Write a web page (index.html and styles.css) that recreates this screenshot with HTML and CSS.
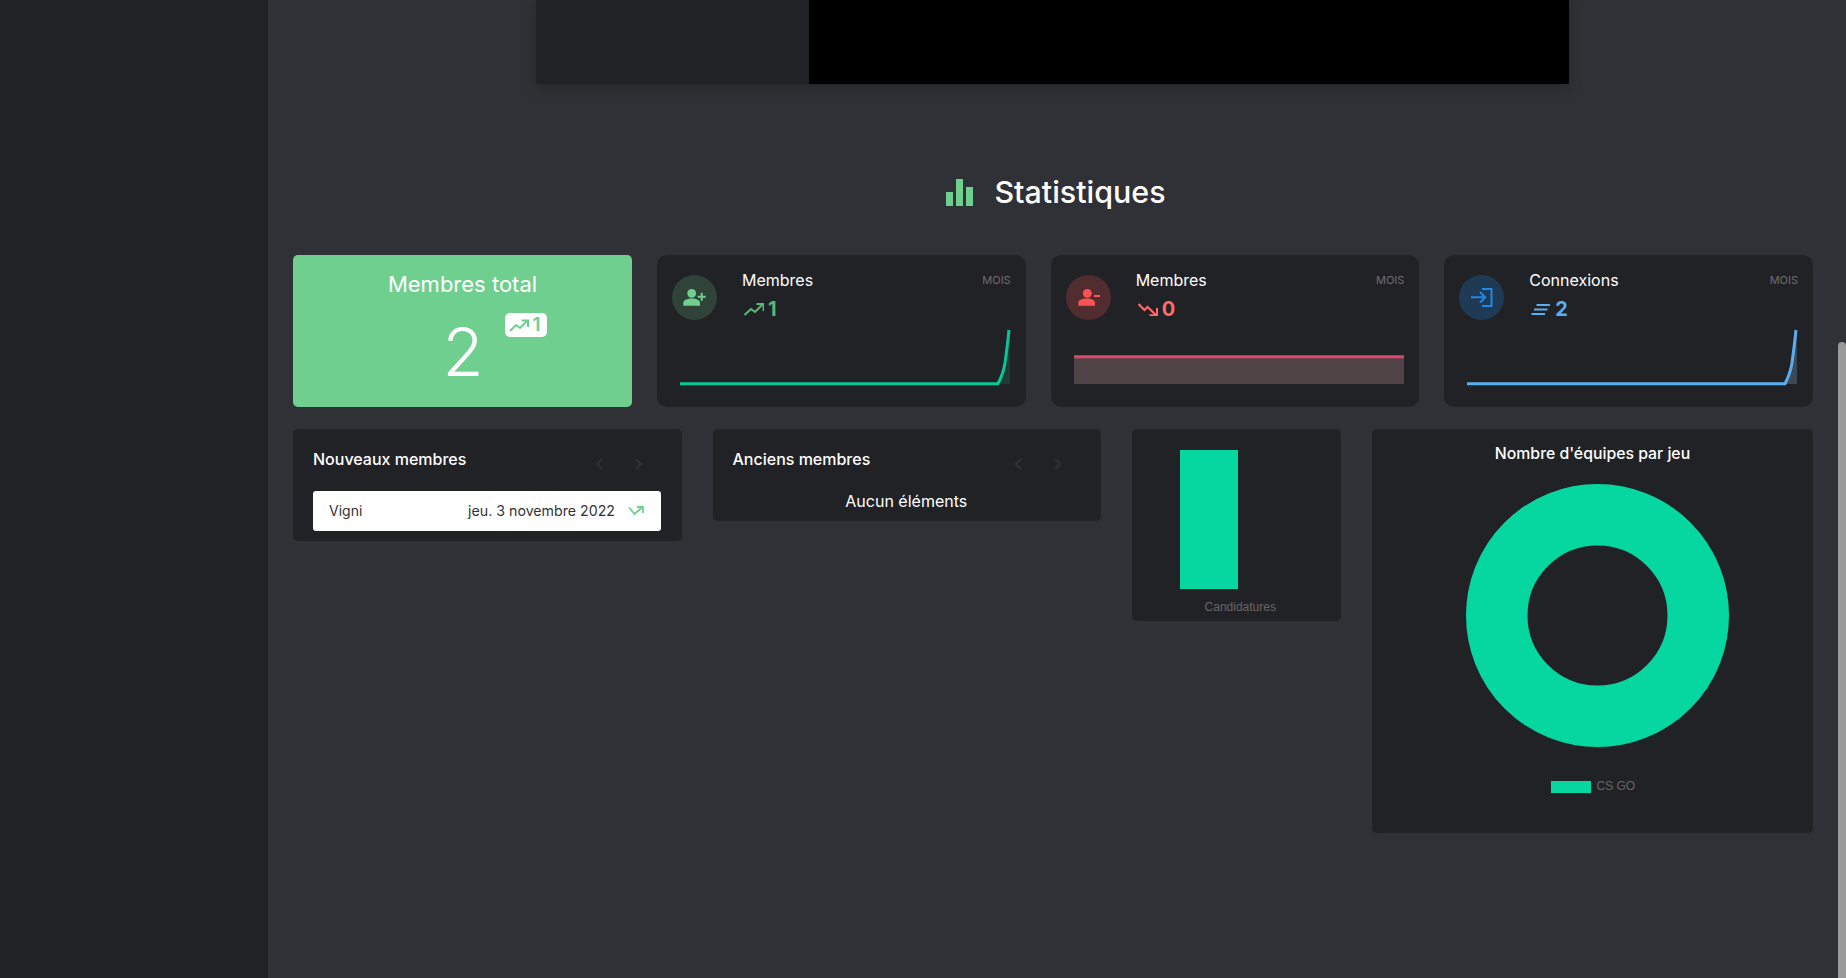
FILE: index.html
```html
<!DOCTYPE html>
<html lang="fr">
<head>
    <meta charset="UTF-8">
    <meta name="viewport" content="width=device-width, initial-scale=1.0">
    <title>Statistiques</title>
    <link rel="stylesheet" href="styles.css">
</head>
<body>
    <div class="app">
        <aside class="sidebar"></aside>

        <main class="content">
            <div class="video-block">
                <div class="video-side"></div>
                <div class="video-player"></div>
            </div>

            <h2 class="section-title">
                <svg class="section-icon" viewBox="0 0 27 27" aria-hidden="true">
                    <rect x="0" y="13" width="7" height="14"/>
                    <rect x="10" y="0" width="7" height="27"/>
                    <rect x="20" y="8" width="7" height="19"/>
                </svg>
                Statistiques
            </h2>

            <section class="stats-row">
                <div class="total-card">
                    <div class="total-title">Membres total</div>
                    <div class="total-value">2
                        <span class="total-badge">
                            <svg class="trend-small" viewBox="0 0 20 13" aria-hidden="true">
                                <path d="M1 12 L7 6 L11 9 L18 2"/>
                                <path d="M12.5 1.5 H19 V8"/>
                            </svg>1
                        </span>
                    </div>
                </div>

                <div class="stat-card">
                    <div class="stat-head">
                        <svg class="stat-circle circle-green" viewBox="0 0 45 45" aria-hidden="true">
                            <circle cx="19.7" cy="18.3" r="4.4"/>
                            <path d="M11.3 30.7 V28 C11.3 25 15 23.4 19.7 23.4 C24.4 23.4 28 25 28 28 V30.7 Z"/>
                            <path class="icon-line" d="M29.7 17.7 V25.7 M25.7 21.7 H33.7"/>
                        </svg>
                        <div class="stat-text">
                            <div class="stat-title">Membres</div>
                            <div class="stat-value value-green">
                                <svg class="trend" viewBox="0 0 20 13" aria-hidden="true">
                                    <path d="M0.5 12 L7 6 L11 9 L18.5 1.5"/>
                                    <path d="M12.5 1 H19.5 V8"/>
                                </svg>1
                            </div>
                        </div>
                        <span class="stat-period">MOIS</span>
                    </div>
                    <svg class="stat-chart chart-teal" viewBox="0 0 330 60" aria-hidden="true">
                        <path class="chart-area" d="M318 56 C320 52 324 44 325.6 35 C327.5 24 329 12 330 2 V56 Z"/>
                        <path class="chart-line" d="M0 55.7 H318 C320 52 323.5 44 325 35 C326.5 24 328 12 329 2"/>
                    </svg>
                </div>

                <div class="stat-card">
                    <div class="stat-head">
                        <svg class="stat-circle circle-red" viewBox="0 0 45 45" aria-hidden="true">
                            <circle cx="21.3" cy="18.3" r="4.4"/>
                            <path d="M12.3 30.7 V28 C12.3 25 16 23.4 20.7 23.4 C25.4 23.4 29 25 29 28 V30.7 Z"/>
                            <path class="icon-line" d="M28 21 H34"/>
                        </svg>
                        <div class="stat-text">
                            <div class="stat-title">Membres</div>
                            <div class="stat-value value-red">
                                <svg class="trend" viewBox="0 0 20 13" aria-hidden="true">
                                    <path d="M0.5 1 L6.5 7 L9.5 4 L18 12"/>
                                    <path d="M19 5 V12.3 H11.5"/>
                                </svg>0
                            </div>
                        </div>
                        <span class="stat-period">MOIS</span>
                    </div>
                    <svg class="stat-chart chart-red" viewBox="0 0 330 60" aria-hidden="true">
                        <rect class="chart-area" x="0" y="28" width="330" height="28"/>
                        <path class="chart-line" d="M0 28.7 H330"/>
                    </svg>
                </div>

                <div class="stat-card">
                    <div class="stat-head">
                        <svg class="stat-circle circle-blue" viewBox="0 0 45 45" aria-hidden="true">
                            <path class="icon-line" d="M23 14 H32.5 V31 H23"/>
                            <path class="icon-line" d="M12 22.3 H26 M21 17 L26.3 22.3 L21 27.6"/>
                        </svg>
                        <div class="stat-text">
                            <div class="stat-title">Connexions</div>
                            <div class="stat-value value-blue">
                                <svg class="trend" viewBox="0 0 20 13" aria-hidden="true">
                                    <path d="M5.5 2 H19 M3 6.5 H16.5 M0.5 11 H14"/>
                                </svg>2
                            </div>
                        </div>
                        <span class="stat-period">MOIS</span>
                    </div>
                    <svg class="stat-chart chart-blue" viewBox="0 0 330 60" aria-hidden="true">
                        <path class="chart-area" d="M318 56 C320 52 324 44 325.6 35 C327.5 24 329 12 330 2 V56 Z"/>
                        <path class="chart-line" d="M0 55.7 H318 C320 52 323.5 44 325 35 C326.5 24 328 12 329 2"/>
                    </svg>
                </div>
            </section>

            <section class="panels-row">
                <div class="panel list-panel">
                    <div class="panel-head">
                        <span class="panel-title">Nouveaux membres</span>
                        <div class="panel-nav">
                            <svg viewBox="0 0 8 12" aria-hidden="true"><path d="M7 1 L2 6 L7 11"/></svg>
                            <svg viewBox="0 0 8 12" aria-hidden="true"><path d="M1 1 L6 6 L1 11"/></svg>
                        </div>
                    </div>
                    <div class="member-row">
                        <span class="member-name">Vigni</span>
                        <span class="member-date">jeu. 3 novembre 2022</span>
                        <svg class="member-icon" viewBox="0 0 16 10" aria-hidden="true">
                            <path d="M1 1.5 L6.5 8 L14 1.5"/>
                            <path d="M9 1 H15 V7"/>
                        </svg>
                    </div>
                </div>

                <div class="panel list-panel">
                    <div class="panel-head">
                        <span class="panel-title">Anciens membres</span>
                        <div class="panel-nav">
                            <svg viewBox="0 0 8 12" aria-hidden="true"><path d="M7 1 L2 6 L7 11"/></svg>
                            <svg viewBox="0 0 8 12" aria-hidden="true"><path d="M1 1 L6 6 L1 11"/></svg>
                        </div>
                    </div>
                    <div class="panel-empty">Aucun éléments</div>
                </div>

                <div class="panel bar-panel">
                    <div class="bar"></div>
                    <div class="chart-label bar-label">Candidatures</div>
                </div>

                <div class="panel donut-panel">
                    <div class="donut-title">Nombre d'équipes par jeu</div>
                    <svg class="donut" viewBox="0 0 263 263" aria-hidden="true">
                        <circle cx="131.5" cy="131.5" r="100.75"/>
                    </svg>
                    <div class="legend">
                        <span class="legend-swatch"></span>
                        <span class="chart-label legend-text">CS GO</span>
                    </div>
                </div>
            </section>
        </main>
    </div>

    <div class="scroll-thumb"></div>
</body>
</html>
```

FILE: styles.css
```css
html,
body {
    height: 100%;
    margin: 0;
    overflow: hidden;
}

body {
    font-family: Inter, "Noto Sans", sans-serif;
    background-color: #303136;
    color: #fff;
}

.app {
    display: flex;
    height: 978px;
}

.sidebar {
    width: 268px;
    flex-shrink: 0;
    background-color: #212226;
}

.content {
    flex: 1;
    min-width: 0;
    padding: 0 33px 0 25px;
}

/* top of the page, the rest is scrolled away */
.video-block {
    display: flex;
    height: 84px;
    width: 1033px;
    margin-left: 243px;
    box-shadow: 0 4px 12px rgba(0, 0, 0, 0.22);
}

.video-side {
    width: 273px;
    background-color: #212226;
}

.video-player {
    flex: 1;
    background-color: #000;
}

.section-title {
    display: flex;
    justify-content: center;
    align-items: center;
    gap: 21px;
    height: 34px;
    margin: 91px 0 46px;
    padding-left: 6px;
    font-size: 30.4px;
    font-weight: 500;
}

.section-icon {
    width: 27px;
    height: 27px;
    fill: #6fcf8f;
}

/* first row */
.stats-row {
    display: grid;
    grid-template-columns: 339px 1fr 1fr 1fr;
    gap: 25px;
    height: 152px;
}

.total-card {
    background-color: #6fcf8f;
    border-radius: 5px;
    text-align: center;
}

.total-title {
    margin-top: 16px;
    font-size: 22px;
    line-height: 26px;
}

.total-value {
    position: relative;
    width: 40px;
    margin: 15px auto 0;
    font-size: 67px;
    font-weight: 300;
    line-height: 80px;
}

.total-badge {
    position: absolute;
    left: 62px;
    top: 1px;
    display: flex;
    align-items: center;
    gap: 4px;
    height: 24px;
    padding: 0 6px 0 4px;
    background-color: #fff;
    border-radius: 5px;
    color: #6fcf8f;
    font-size: 19px;
    font-weight: 600;
    line-height: 24px;
}

.trend-small {
    width: 20px;
    height: 13px;
    fill: none;
    stroke: #6fcf8f;
    stroke-width: 2;
}

.stat-card {
    padding: 15px 15px 0;
    background-color: #212226;
    border-radius: 10px;
}

.stat-head {
    display: flex;
    align-items: flex-start;
    height: 52px;
}

.stat-circle {
    width: 45px;
    height: 45px;
    margin-top: 5px;
    border-radius: 50%;
    flex-shrink: 0;
}

.icon-line {
    fill: none;
    stroke-width: 2;
}

.circle-green {
    background-color: #2f4338;
    fill: #6fcf8f;
    stroke: none;
}

.circle-green .icon-line {
    stroke: #6fcf8f;
}

.circle-red {
    background-color: #512d30;
    fill: #ff5252;
}

.circle-red .icon-line {
    stroke: #ff5252;
}

.circle-blue {
    background-color: #1f3a55;
}

.circle-blue .icon-line {
    stroke: #1e88e5;
}

.stat-text {
    margin-left: 25px;
}

.stat-title {
    font-size: 16px;
    line-height: 20px;
}

.stat-value {
    display: flex;
    align-items: center;
    gap: 4px;
    height: 26px;
    margin-top: 6px;
    font-size: 20px;
    font-weight: 700;
}

.trend {
    width: 20px;
    height: 13px;
    margin-left: 2px;
    fill: none;
    stroke-width: 2;
}

.value-green {
    color: #57b877;
}

.value-green .trend {
    stroke: #57b877;
}

.value-red {
    color: #ff6b6b;
}

.value-red .trend {
    stroke: #ff6b6b;
}

.value-blue {
    color: #5aaef0;
}

.value-blue .trend {
    stroke: #5aaef0;
}

.stat-period {
    margin-left: auto;
    font-size: 11px;
    line-height: 20px;
    color: #6e6e6e;
}

.stat-chart {
    display: block;
    width: 330px;
    height: 60px;
    margin: 6px 0 0 8px;
    overflow: visible;
}

.chart-line {
    fill: none;
    stroke-width: 3;
}

.chart-teal .chart-line {
    stroke: #06c795;
}

.chart-teal .chart-area {
    fill: #1d3a36;
}

.chart-red .chart-line {
    stroke: #e0436b;
}

.chart-red .chart-area {
    fill: #514446;
}

.chart-blue .chart-line {
    stroke: #5aaef0;
}

.chart-blue .chart-area {
    fill: #3c4854;
}

/* second row */
.panels-row {
    display: grid;
    grid-template-columns: 388.5px 388px 209.5px 1fr;
    column-gap: 31px;
    align-items: start;
    margin-top: 22px;
}

.panel {
    background-color: #212226;
    border-radius: 5px;
}

.list-panel {
    padding: 20px 20.5px 10px 20px;
}

.panel-head {
    display: flex;
    justify-content: space-between;
    height: 20px;
}

.panel-title {
    font-size: 16px;
    font-weight: 500;
    line-height: 20px;
}

.panel-nav {
    display: flex;
    gap: 32px;
    margin: 9px 18px 0 0;
}

.panel-nav svg {
    width: 8px;
    height: 12px;
    fill: none;
    stroke: #303136;
    stroke-width: 2.2;
}

.member-row {
    display: flex;
    align-items: center;
    box-sizing: border-box;
    height: 40px;
    margin: 22px 0 0;
    padding: 0 17px 2px 16px;
    background-color: #fff;
    border-radius: 3px;
    color: #333;
    font-size: 14px;
}

.member-date {
    margin-left: auto;
    font-size: 14.2px;
}

.member-icon {
    width: 16px;
    height: 10px;
    margin: 2px 0 0 13px;
    fill: none;
    stroke: #6fcf8f;
    stroke-width: 1.8;
}

.panel-empty {
    margin-top: 22px;
    font-size: 16px;
    line-height: 20px;
    text-align: center;
}

.bar-panel {
    height: 192px;
    padding-top: 21px;
    box-sizing: border-box;
}

.bar {
    width: 58px;
    height: 139px;
    margin-left: 48px;
    background-color: #06d6a0;
}

.chart-label {
    font-family: "Liberation Sans", Arial, sans-serif;
    font-size: 12px;
    line-height: 14px;
    color: #666;
}

.bar-label {
    margin-top: 11px;
    padding-left: 8px;
    text-align: center;
}

.donut-panel {
    height: 404px;
    padding-top: 15px;
    box-sizing: border-box;
}

.donut-title {
    font-size: 15.8px;
    font-weight: 500;
    line-height: 20px;
    text-align: center;
}

.donut {
    display: block;
    width: 263px;
    height: 263px;
    margin: 20px 0 0 94px;
    fill: none;
    stroke: #06d6a0;
    stroke-width: 61.5;
}

.legend {
    display: flex;
    align-items: center;
    gap: 6px;
    margin: 34px 0 0 178.5px;
}

.legend-swatch {
    width: 40px;
    height: 12px;
    background-color: #06d6a0;
}

.legend-text {
    margin-top: -2px;
}

/* browser scrollbar */
.scroll-thumb {
    position: absolute;
    right: 0;
    top: 342px;
    bottom: 0;
    width: 8px;
    background-color: #9a9a9a;
    border-radius: 4px 4px 0 0;
}
```
